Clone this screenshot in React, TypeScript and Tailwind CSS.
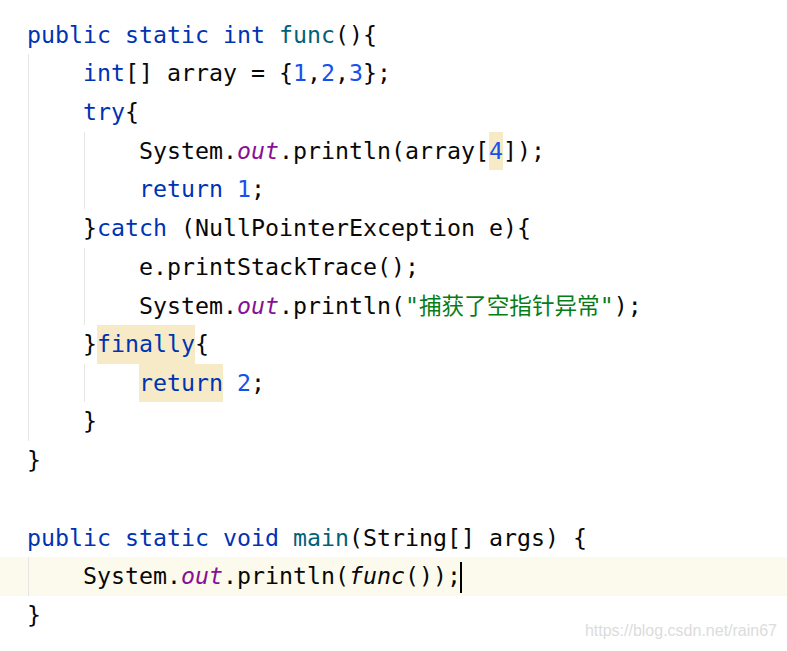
import React from 'react'

type Tok = { t: string; c?: string }

const KW = 'text-[#0033b3]'
const NUM = 'text-[#1750eb]'
const FN = 'text-[#00627a]'
const FIELD = 'text-[#871094] italic'
const STR = 'text-[#067d17]'
const HL = 'inline-block bg-[#f6ebc6]'

// each line: tokens, indent guides (x offsets), caret row flag
const lines: { toks: Tok[]; guides?: number[]; current?: boolean }[] = [
  { toks: [{ t: 'public static int ', c: KW }, { t: 'func', c: FN }, { t: '(){' }] },
  { toks: [{ t: '    ' }, { t: 'int', c: KW }, { t: '[] array = {' }, { t: '1', c: NUM }, { t: ',' }, { t: '2', c: NUM }, { t: ',' }, { t: '3', c: NUM }, { t: '};' }], guides: [28] },
  { toks: [{ t: '    ' }, { t: 'try', c: KW }, { t: '{' }], guides: [28] },
  { toks: [{ t: '        System.' }, { t: 'out', c: FIELD }, { t: '.println(array[' }, { t: '4', c: `${NUM} ${HL}` }, { t: ']);' }], guides: [28, 84] },
  { toks: [{ t: '        ' }, { t: 'return', c: KW }, { t: ' ' }, { t: '1', c: NUM }, { t: ';' }], guides: [28, 84] },
  { toks: [{ t: '    }' }, { t: 'catch', c: KW }, { t: ' (NullPointerException e){' }], guides: [28] },
  { toks: [{ t: '        e.printStackTrace();' }], guides: [28, 84] },
  { toks: [{ t: '        System.' }, { t: 'out', c: FIELD }, { t: '.println(' }, { t: '"' , c: STR }, { t: '捕获了空指针异常', c: `${STR} cjk` }, { t: '"', c: STR }, { t: ');' }], guides: [28, 84] },
  { toks: [{ t: '    }' }, { t: 'finally', c: `${KW} ${HL}` }, { t: '{' }], guides: [28] },
  { toks: [{ t: '        ' }, { t: 'return', c: `${KW} ${HL}` }, { t: ' ' }, { t: '2', c: NUM }, { t: ';' }], guides: [28, 84] },
  { toks: [{ t: '    }' }], guides: [28] },
  { toks: [{ t: '}' }] },
  { toks: [{ t: '' }] },
  { toks: [{ t: 'public static void ', c: KW }, { t: 'main', c: FN }, { t: '(String[] args) {' }] },
  { toks: [{ t: '    System.' }, { t: 'out', c: FIELD }, { t: '.println(' }, { t: 'func', c: 'italic' }, { t: '());' }], guides: [28], current: true },
  { toks: [{ t: '}' }] },
]

function Line({ toks, guides, current }: { toks: Tok[]; guides?: number[]; current?: boolean }) {
  return (
    <div className={`relative h-[38.7px] pl-[27px] whitespace-pre ${current ? 'bg-[#fcfaed]' : ''}`}>
      {guides?.map((g) => (
        <span key={g} className="absolute top-0 bottom-0 w-px bg-[#e6e6e6]" style={{ left: g }} />
      ))}
      {toks.map((tok, i) =>
        tok.c?.includes('cjk') ? (
          <span
            key={i}
            className="text-[#067d17] text-[22.6px] [font-family:'Noto_Sans_CJK_SC',sans-serif]"
          >
            {tok.t}
          </span>
        ) : (
          <span key={i} className={`relative ${tok.c ?? ''}`}>
            {tok.t}
          </span>
        )
      )}
      {current && <span className="inline-block w-[2px] h-[31px] bg-black align-middle -ml-px" />}
    </div>
  )
}

export default function App() {
  return (
    <div className="relative w-[787px] h-[651px] bg-white overflow-hidden">
      <div className="pt-[15.6px] text-[#080808] text-[23.25px] leading-[38.7px] [font-family:'DejaVu_Sans_Mono',monospace]">
        {lines.map((l, i) => (
          <Line key={i} {...l} />
        ))}
      </div>
      {/* csdn watermark */}
      <div className="absolute right-[10px] bottom-[8px] text-[16px] text-[#dcdcdc] [font-family:'Liberation_Sans',Arial,sans-serif]">
        https://blog.csdn.net/rain67
      </div>
    </div>
  )
}
